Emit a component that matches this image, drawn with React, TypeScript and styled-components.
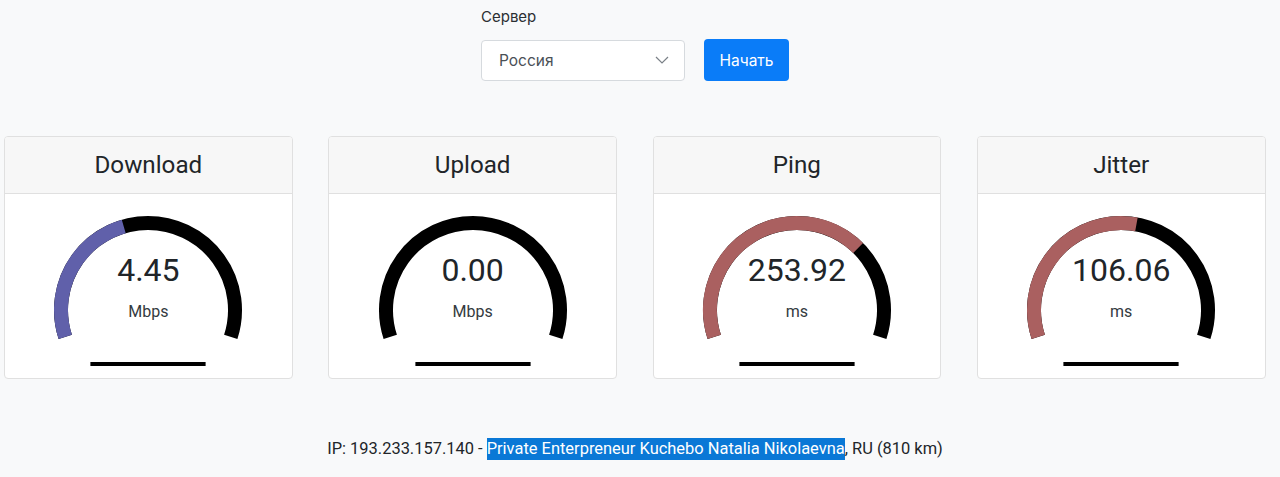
import React from "react";
import styled, { createGlobalStyle } from "styled-components";

const GlobalStyle = createGlobalStyle`
  html, body {
    margin: 0;
    padding: 0;
    background: #f8f9fa;
  }
  body {
    font-family: Roboto, "Liberation Sans", Arial, sans-serif;
    color: #212529;
  }
`;

const Page = styled.div`
  min-height: 477px;
  background: #f8f9fa;
  box-sizing: border-box;
  padding-top: 6px;
`;

const TopBar = styled.div`
  display: flex;
  justify-content: center;
  padding-right: 10px;
`;

const ServerForm = styled.div`
  display: flex;
  flex-direction: column;
  font-family: Inter, "Noto Sans", sans-serif;
`;

const Label = styled.label`
  font-size: 15px;
  line-height: 22px;
  color: #2b2f33;
  margin-bottom: 11px;
`;

const Controls = styled.div`
  display: flex;
  align-items: center;
  gap: 19px;
`;

const SelectBox = styled.div`
  box-sizing: border-box;
  width: 204px;
  height: 41px;
  display: flex;
  align-items: center;
  justify-content: space-between;
  padding: 0 15px 0 17px;
  background: #fff;
  border: 1px solid #d6dade;
  border-radius: 4px;
  font-size: 15.5px;
  color: #4a5056;
`;

const StartButton = styled.button`
  box-sizing: border-box;
  width: 85px;
  height: 42px;
  border: none;
  border-radius: 4px;
  background: #0a7cf8;
  color: #fff;
  font-family: Inter, "Noto Sans", sans-serif;
  font-size: 15.5px;
  padding: 0;
  cursor: pointer;
`;

const Grid = styled.div`
  display: grid;
  grid-template-columns: repeat(4, 288.7px);
  column-gap: 35.6px;
  padding-left: 4px;
  margin-top: 55px;
`;

const Card = styled.div`
  background: #fff;
  border: 1px solid #e0e0e0;
  border-radius: 4px;
  overflow: hidden;
`;

const CardHeader = styled.div`
  height: 56px;
  line-height: 56px;
  text-align: center;
  font-size: 24.2px;
  color: #212529;
  background: #f7f7f7;
  border-bottom: 1px solid #e0e0e0;
`;

const CardBody = styled.div`
  position: relative;
  height: 184px;
  display: flex;
  justify-content: center;
`;

const GaugeSvg = styled.svg`
  display: block;
  flex: none;
`;

const Readout = styled.div`
  position: absolute;
  top: 59.5px;
  left: 0;
  right: 0;
  display: flex;
  flex-direction: column;
  align-items: center;
`;

const Value = styled.div`
  font-size: 32px;
  line-height: 32px;
  color: #212529;
`;

const Unit = styled.div`
  margin-top: 18px;
  font-size: 16px;
  line-height: 16px;
  color: #343a40;
`;

const Footer = styled.div`
  margin-top: 57.5px;
  padding-right: 10px;
  text-align: center;
  font-size: 16.45px;
  line-height: 24px;
  color: #212529;
`;

const Highlight = styled.span`
  background: #0a78d6;
  color: #fff;
  padding: 1px 0 2px;
`;

const CX = 144;
const CY = 116;
const R = 87;
const START = -198;
const SPAN = 216;

function pt(deg: number): [number, number] {
  const a = (deg * Math.PI) / 180;
  return [CX + R * Math.cos(a), CY + R * Math.sin(a)];
}

function arcPath(a0: number, a1: number): string {
  const [x0, y0] = pt(a0);
  const [x1, y1] = pt(a1);
  const large = a1 - a0 > 180 ? 1 : 0;
  return `M ${x0.toFixed(2)} ${y0.toFixed(2)} A ${R} ${R} 0 ${large} 1 ${x1.toFixed(2)} ${y1.toFixed(2)}`;
}

const mbpsToAmount = (s: number) => 1 - 1 / Math.pow(1.3, Math.sqrt(s));
const msToAmount = (d: number) => 1 - 1 / Math.pow(1.08, Math.sqrt(d));

type Meter = {
  title: string;
  value: string;
  unit: string;
  amount: number;
  color: string;
};

const meters: Meter[] = [
  { title: "Download", value: "4.45", unit: "Mbps", amount: mbpsToAmount(4.45), color: "#6060AA" },
  { title: "Upload", value: "0.00", unit: "Mbps", amount: 0, color: "#309030" },
  { title: "Ping", value: "253.92", unit: "ms", amount: msToAmount(253.92), color: "#AA6060" },
  { title: "Jitter", value: "106.06", unit: "ms", amount: msToAmount(106.06), color: "#AA6060" },
];

function Gauge({ amount, color }: { amount: number; color: string }) {
  return (
    <GaugeSvg width={288} height={184} viewBox="0 0 288 184">
      <path d={arcPath(START, START + SPAN)} fill="none" stroke="#000" strokeWidth={14} />
      {amount > 0 && (
        <path d={arcPath(START, START + SPAN * amount)} fill="none" stroke={color} strokeWidth={14} />
      )}
      <rect x={86.4} y={168} width={115.2} height={4} fill="#000" />
    </GaugeSvg>
  );
}

function Chevron() {
  return (
    <svg width="14" height="8" viewBox="0 0 14 8">
      <polyline points="1,1 7,7 13,1" fill="none" stroke="#7a8087" strokeWidth="1.2" />
    </svg>
  );
}

export default function App() {
  return (
    <>
      <GlobalStyle />
      <Page>
        <TopBar>
          <ServerForm>
            <Label>Сервер</Label>
            <Controls>
              <SelectBox>
                <span>Россия</span>
                <Chevron />
              </SelectBox>
              <StartButton>Начать</StartButton>
            </Controls>
          </ServerForm>
        </TopBar>
        <Grid>
          {meters.map((m) => (
            <Card key={m.title}>
              <CardHeader>{m.title}</CardHeader>
              <CardBody>
                <Gauge amount={m.amount} color={m.color} />
                <Readout>
                  <Value>{m.value}</Value>
                  <Unit>{m.unit}</Unit>
                </Readout>
              </CardBody>
            </Card>
          ))}
        </Grid>
        <Footer>
          IP: 193.233.157.140 - <Highlight>Private Enterpreneur Kuchebo Natalia Nikolaevna</Highlight>, RU (810 km)
        </Footer>
      </Page>
    </>
  );
}
